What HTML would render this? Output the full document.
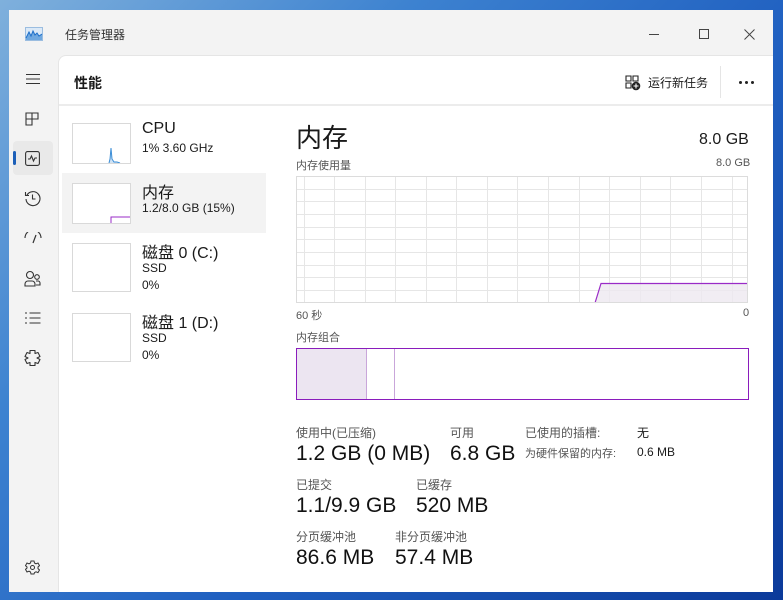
<!DOCTYPE html>
<html><head><meta charset="utf-8"><style>
*{margin:0;padding:0;box-sizing:border-box}
body{width:783px;height:600px;overflow:hidden;position:relative;font-family:"Liberation Sans","Noto Sans CJK SC",sans-serif;color:#1a1a1a;
background:linear-gradient(135deg,#7fb0dc 0%,#3d82d0 30%,#1f5fc0 60%,#0b3a9a 100%)}
.abs{position:absolute}
.win{left:9px;top:10px;width:764px;height:582px;background:#f3f3f3;overflow:hidden}
.content{left:49px;top:45px;width:715px;height:537px;background:#fff;border-top-left-radius:8px;border-left:1px solid #e5e5e5;border-top:1px solid #e5e5e5}
.t{position:absolute;white-space:nowrap}
.thumb{position:absolute;width:59px;height:41px;border:1px solid #d9d9d9;background:#fff}
.lbl{font-size:11px;color:#555}
.big{font-size:21px;color:#111}
</style></head><body>
<div class="abs win">
  <svg class="abs" style="left:16px;top:17px" width="18" height="14" viewBox="0 0 18 14"><rect x="0.5" y="0.5" width="17" height="13" fill="#dbe9f7" stroke="#9bbde0"/><path d="M1 11 L4 5 L6 9 L8 4 L10 8 L12 6 L14 9 L17 7 L17 13 L1 13Z" fill="#6fa8e0"/><path d="M1 11 L4 5 L6 9 L8 4 L10 8 L12 6 L14 9 L17 7" fill="none" stroke="#1e6fc9" stroke-width="1"/></svg>
  <div class="t" style="left:56px;top:16px;font-size:12px;color:#333">任务管理器</div>
  <div class="abs" style="left:640px;top:24px;width:10px;height:1px;background:#444"></div>
  <div class="abs" style="left:690px;top:19px;width:10px;height:10px;border:1px solid #444"></div>
  <svg class="abs" style="left:735px;top:19px" width="11" height="11"><path d="M0.5 0.5L10.5 10.5M10.5 0.5L0.5 10.5" stroke="#444" stroke-width="1"/></svg>
  <svg class="abs" style="left:16px;top:63px" width="16" height="12"><path d="M1 1.5h14M1 6h14M1 10.5h14" stroke="#333" stroke-width="1.1"/></svg>
  <svg class="abs" style="left:16px;top:102px" width="14" height="14"><path d="M1 1h12v6H7v6H1z M7 1v6 M1 7h6" fill="none" stroke="#333" stroke-width="1.1"/></svg>
  <div class="abs" style="left:4px;top:131px;width:40px;height:34px;background:#e9e9e9;border-radius:4px"></div>
  <div class="abs" style="left:4px;top:141px;width:3px;height:14px;background:#1c5fb8;border-radius:2px"></div>
  <svg class="abs" style="left:16px;top:141px" width="15" height="15"><rect x="0.6" y="0.6" width="13.8" height="13.8" rx="2" fill="none" stroke="#333" stroke-width="1.1"/><path d="M3 8h2l1.5-3 2 5 1.5-3h2" fill="none" stroke="#333" stroke-width="1.1"/></svg>
  <svg class="abs" style="left:15px;top:180px" width="17" height="17"><path d="M3 5A7 7 0 1 1 2 9" fill="none" stroke="#333" stroke-width="1.1"/><path d="M1.5 2v3.5H5" fill="none" stroke="#333" stroke-width="1.1"/><path d="M8.5 4.5v4.5h3" fill="none" stroke="#333" stroke-width="1.1"/></svg>
  <svg class="abs" style="left:15px;top:222px" width="18" height="14"><path d="M1 6A8 8 0 0 1 17 6" fill="none" stroke="#333" stroke-width="1.1"/><path d="M9 11L12 3" stroke="#333" stroke-width="1.2"/></svg>
  <svg class="abs" style="left:15px;top:260px" width="17" height="17"><circle cx="6" cy="5" r="3.5" fill="none" stroke="#333" stroke-width="1.1"/><path d="M1 16v-2a3 3 0 0 1 3-3h4a3 3 0 0 1 3 3v2z" fill="none" stroke="#333" stroke-width="1.1"/><circle cx="13" cy="7" r="2.3" fill="none" stroke="#333" stroke-width="1.1"/><path d="M12 11h2a2 2 0 0 1 2 2v2h-4" fill="none" stroke="#333" stroke-width="1.1"/></svg>
  <svg class="abs" style="left:16px;top:302px" width="16" height="12"><path d="M0 1h2M0 6h2M0 11h2M4.5 1h11M4.5 6h11M4.5 11h11" stroke="#333" stroke-width="1.1"/></svg>
  <svg class="abs" style="left:15px;top:339px" width="17" height="17"><path d="M6 1.5h5v3l3-1 2 4-3 1.5 3 1.5-2 4-3-1v3H6v-3l-3 1-2-4 3-1.5-3-1.5 2-4 3 1z" fill="none" stroke="#333" stroke-width="1.1" stroke-linejoin="round"/></svg>
  <svg class="abs" style="left:16px;top:550px" width="15" height="15"><circle cx="7.5" cy="7.5" r="2" fill="none" stroke="#333"/><path d="M6 1h3l.5 2 1.5.8 2-.8 1.5 2.6-1.5 1.4v1.6l1.5 1.4-1.5 2.6-2-.8-1.5.8L9 14H6l-.5-2-1.5-.8-2 .8L.5 9.4 2 8V7L.5 5.6 2 3l2 .8 1.5-.8z" fill="none" stroke="#333" stroke-width="1"/></svg>

  <div class="abs content">
    <div class="t" style="left:15px;top:17px;font-size:14px;font-weight:bold;color:#1a1a1a">性能</div>
    <svg class="abs" style="left:566px;top:19px" width="16" height="16"><path d="M1 1h5v5H1zM8 1h5v5H8zM1 8h5v5H1z" fill="none" stroke="#222" stroke-width="1.1"/><circle cx="11" cy="11" r="4.3" fill="#222"/><path d="M11 8.5v5M8.5 11h5" stroke="#fff" stroke-width="1.1"/></svg>
    <div class="t" style="left:589px;top:18px;font-size:12px">运行新任务</div>
    <div class="abs" style="left:661px;top:10px;width:1px;height:32px;background:#e5e5e5"></div>
    <div class="abs" style="left:680px;top:25px;width:3px;height:3px;background:#222;border-radius:50%"></div>
    <div class="abs" style="left:686px;top:25px;width:3px;height:3px;background:#222;border-radius:50%"></div>
    <div class="abs" style="left:692px;top:25px;width:3px;height:3px;background:#222;border-radius:50%"></div>
    <div class="abs" style="left:0;top:48px;width:715px;height:2px;background:#ececec"></div>

    <div class="thumb" style="left:13px;top:67px"><svg width="57" height="39" class="abs"><path d="M36 39 L37 35 L38 24 L39 35 L41 38 L44 38 L47 39" fill="#cfe3f5" stroke="#3a8dd6" stroke-width="1"/></svg></div>
    <div class="t" style="left:83px;top:64px;font-size:16px">CPU</div>
    <div class="t" style="left:83px;top:85px;font-size:12px">1% 3.60 GHz</div>

    <div class="abs" style="left:3px;top:117px;width:204px;height:60px;background:#f3f3f3"></div>
    <div class="thumb" style="left:13px;top:127px"><svg width="57" height="39" class="abs"><path d="M38 39V33H57" fill="none" stroke="#9a2bc7" stroke-width="1"/></svg></div>
    <div class="t" style="left:83px;top:123px;font-size:16px">内存</div>
    <div class="t" style="left:83px;top:145px;font-size:12px">1.2/8.0 GB (15%)</div>

    <div class="thumb" style="left:13px;top:187px;height:49px"></div>
    <div class="t" style="left:83px;top:183px;font-size:16px">磁盘 0 (C:)</div>
    <div class="t" style="left:83px;top:205px;font-size:12px">SSD</div>
    <div class="t" style="left:83px;top:222px;font-size:12px">0%</div>

    <div class="thumb" style="left:13px;top:257px;height:49px"></div>
    <div class="t" style="left:83px;top:253px;font-size:16px">磁盘 1 (D:)</div>
    <div class="t" style="left:83px;top:275px;font-size:12px">SSD</div>
    <div class="t" style="left:83px;top:292px;font-size:12px">0%</div>

    <div class="t" style="left:237px;top:62px;font-size:26px">内存</div>
    <div class="t" style="left:640px;top:75px;font-size:16px">8.0 GB</div>
    <div class="t lbl" style="left:237px;top:101px">内存使用量</div>
    <div class="t lbl" style="left:657px;top:101px">8.0 GB</div>
    <svg class="abs" style="left:237px;top:120px" width="453" height="128">
      <g stroke="#e6e6e6" stroke-width="1">
        <path d="M8.5 0V127M38.5 0V127M69.5 0V127M99.5 0V127M130.5 0V127M160.5 0V127M191.5 0V127M221.5 0V127M252.5 0V127M283.5 0V127M313.5 0V127M344.5 0V127M374.5 0V127M405.5 0V127M436.5 0V127"/>
        <path d="M0 13.5H452M0 25.5H452M0 38.5H452M0 51.5H452M0 63.5H452M0 76.5H452M0 89.5H452M0 101.5H452M0 114.5H452"/>
      </g>
      <path d="M299 127L305 107.5H452V127Z" fill="#ede8f0" opacity="0.8"/>
      <path d="M299 127L305 107.5H452" fill="none" stroke="#9a2bc7" stroke-width="1.2"/>
      <rect x="0.5" y="0.5" width="451" height="126" fill="none" stroke="#dcdcdc"/>
    </svg>
    <div class="t lbl" style="left:237px;top:251px">60 秒</div>
    <div class="t lbl" style="left:684px;top:251px">0</div>
    <div class="t lbl" style="left:237px;top:273px">内存组合</div>
    <div class="abs" style="left:237px;top:292px;width:453px;height:52px;border:1px solid #8a1cbc">
      <div class="abs" style="left:0;top:0;width:70px;height:50px;background:#ece5f1;border-right:1px solid #c9a6da"></div>
      <div class="abs" style="left:97px;top:0;width:1px;height:50px;background:#c9a6da"></div>
    </div>

    <div class="t lbl" style="left:237px;top:368px;font-size:12px">使用中(已压缩)</div>
    <div class="t big" style="left:237px;top:386px">1.2 GB (0 MB)</div>
    <div class="t lbl" style="left:391px;top:368px;font-size:12px">可用</div>
    <div class="t big" style="left:391px;top:386px">6.8 GB</div>
    <div class="t lbl" style="left:466px;top:368px;font-size:12px">已使用的插槽:</div>
    <div class="t" style="left:578px;top:368px;font-size:12px">无</div>
    <div class="t lbl" style="left:466px;top:389px">为硬件保留的内存:</div>
    <div class="t" style="left:578px;top:389px;font-size:12px">0.6 MB</div>

    <div class="t lbl" style="left:237px;top:420px;font-size:12px">已提交</div>
    <div class="t big" style="left:237px;top:438px">1.1/9.9 GB</div>
    <div class="t lbl" style="left:357px;top:420px;font-size:12px">已缓存</div>
    <div class="t big" style="left:357px;top:438px">520 MB</div>

    <div class="t lbl" style="left:237px;top:472px;font-size:12px">分页缓冲池</div>
    <div class="t big" style="left:237px;top:490px">86.6 MB</div>
    <div class="t lbl" style="left:336px;top:472px;font-size:12px">非分页缓冲池</div>
    <div class="t big" style="left:336px;top:490px">57.4 MB</div>
  </div>
</div>
</body></html>
